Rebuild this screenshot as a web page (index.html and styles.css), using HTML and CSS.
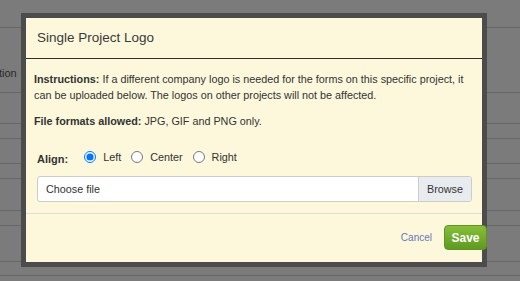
FILE: index.html
```html
<!DOCTYPE html>
<html lang="en">
  <head>
    <meta charset="UTF-8" />
    <title>Single Project Logo</title>
    <link rel="stylesheet" href="styles.css">
  </head>

  <body>
    <div class="page">
      <div class="row" style="height: 27px"></div>
      <div class="row row-text" style="height: 65px">tion</div>
      <div class="row" style="height: 30px"></div>
      <div class="row" style="height: 14px"></div>
      <div class="row" style="height: 24px"></div>
      <div class="row" style="height: 14px"></div>
      <div class="row" style="height: 31px"></div>
      <div class="row" style="height: 14px"></div>
      <div class="row" style="height: 35px"></div>
      <div class="row" style="height: 13px"></div>
    </div>

    <div class="modal">
      <div class="modal-header">Single Project Logo</div>
      <div class="modal-body">
        <p class="note">
          <b>Instructions:</b> If a different company logo is needed for the forms on this specific project, it
          can be uploaded below. The logos on other projects will not be affected.
        </p>
        <p class="note"><b>File formats allowed:</b> JPG, GIF and PNG only.</p>

        <div class="align-row">
          <span class="align-label">Align:</span>
          <label class="radio"><input type="radio" name="align" checked /> Left</label>
          <label class="radio"><input type="radio" name="align" /> Center</label>
          <label class="radio"><input type="radio" name="align" /> Right</label>
        </div>

        <div class="file-input">
          <span class="file-name">Choose file</span>
          <span class="file-browse">Browse</span>
        </div>
      </div>
      <div class="modal-footer">
        <a class="cancel" href="#">Cancel</a>
        <button class="save">Save</button>
      </div>
    </div>
  </body>
</html>
```

FILE: styles.css
```css
body {
  margin: 0;
  font-family: "Liberation Sans", Arial, sans-serif;
  background-color: #7b7b7b;
  color: #333;
  overflow: hidden;
}

.page {
  display: flex;
  flex-direction: column;
}

.row {
  border-bottom: 1px solid #666;
}

.row-text {
  box-sizing: border-box;
  padding-top: 39px;
  font-size: 11px;
  line-height: 13px;
  color: #2a2a2a;
  margin-left: -1px;
}

.modal {
  position: absolute;
  left: 21px;
  top: 13px;
  width: 456px;
  height: 244px;
  border: 5px solid #4c4c4c;
  background-color: #fdf8db;
  display: flex;
  flex-direction: column;
}

.modal-header {
  height: 40px;
  line-height: 40px;
  padding: 0 11px;
  font-size: 13.5px;
  color: #3a3a3a;
  border-bottom: 1px solid #2e2e2e;
}

.modal-body {
  padding: 12px 10px 11px 8px;
  border-bottom: 1px solid #ddd;
}

.note {
  margin: 0 0 10px;
  font-size: 10.8px;
  line-height: 16px;
}

.align-row {
  display: flex;
  align-items: center;
  height: 20px;
  margin: 18px 0 9px 3px;
  font-size: 10.8px;
}

.align-label {
  font-weight: bold;
  font-size: 11px;
  margin-right: 16px;
  padding-top: 3px;
}

.radio {
  display: flex;
  align-items: center;
  margin-right: 10px;
}

.radio input {
  width: 12px;
  height: 12px;
  margin: 0 7px 0 0;
}

.file-input {
  display: flex;
  margin-left: 3px;
  height: 24px;
  border: 1px solid #ccc;
  border-radius: 3px;
  background-color: white;
  font-size: 10.8px;
  overflow: hidden;
}

.file-name {
  flex: 1;
  padding-left: 8px;
  line-height: 24px;
}

.file-browse {
  width: 52px;
  text-align: center;
  line-height: 24px;
  background-color: #e9ecef;
  border-left: 1px solid #ccc;
}

.modal-footer {
  display: flex;
  align-items: center;
  justify-content: flex-end;
  padding-top: 11px;
  margin-right: -5px;
}

.cancel {
  font-size: 10px;
  color: #6877b8;
  text-decoration: none;
  margin-right: 12px;
}

.save {
  width: 43px;
  height: 25px;
  border: 1px solid #5d9424;
  border-radius: 4px;
  background: linear-gradient(#86bf38, #5f9a22);
  color: white;
  font-family: "Liberation Sans", Arial, sans-serif;
  font-size: 12px;
  font-weight: bold;
  padding: 0;
}
```
